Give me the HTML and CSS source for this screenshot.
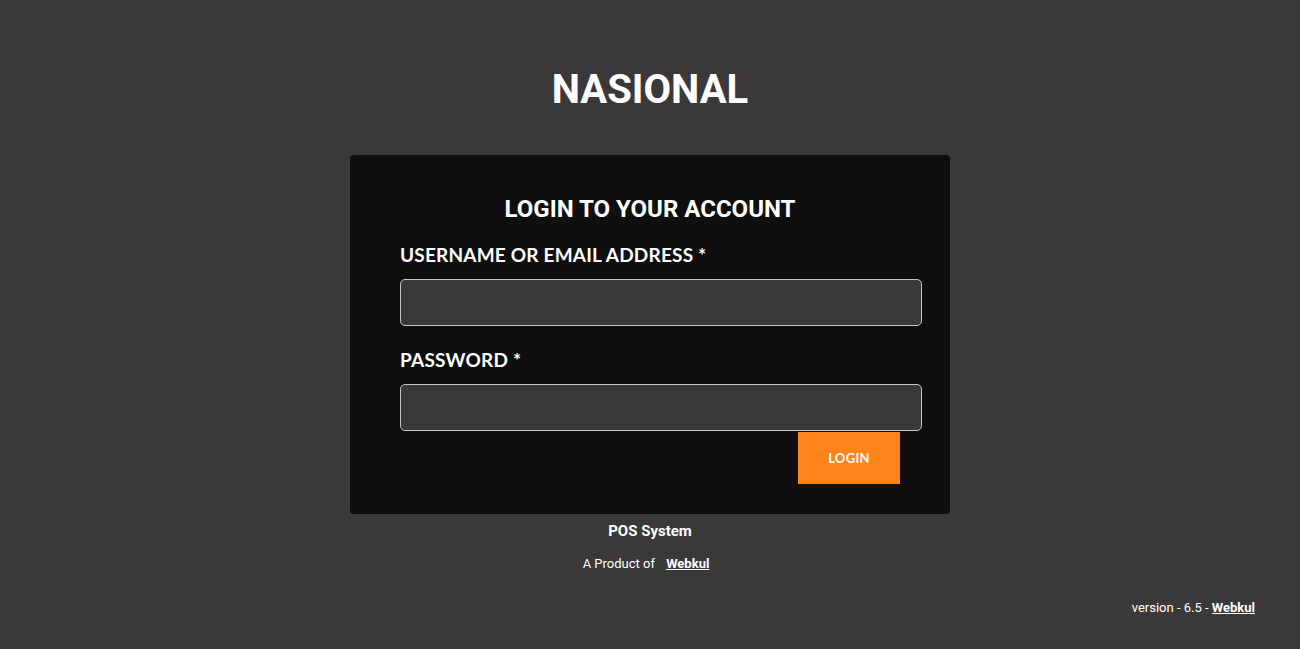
FILE: index.html
```html
<!DOCTYPE html>
<html>
<head>
<meta charset="utf-8">
<link rel="stylesheet" href="styles.css">
</head>
<body>
<div class="page">
  <h1 class="brand">NASIONAL</h1>
  <div class="card">
    <h2 class="card-title">LOGIN TO YOUR ACCOUNT</h2>
    <label class="label">USERNAME OR EMAIL ADDRESS *</label>
    <input class="field" type="text">
    <label class="label label-pw">PASSWORD *</label>
    <input class="field" type="password">
    <div class="actions"><button class="btn">LOGIN</button></div>
  </div>
  <div class="pos">POS System</div>
  <div class="product">A Product of <a class="link" href="#">Webkul</a></div>
  <div class="version">version - 6.5 - <a class="link" href="#">Webkul</a></div>
</div>
</body>
</html>
```
FILE: styles.css
```css
html, body { margin: 0; padding: 0; }
body {
  background: #3a3839;
  font-family: Roboto, "Liberation Sans", sans-serif;
  color: #fff;
  width: 1300px;
  height: 649px;
  overflow: hidden;
}
.page {
  display: flex;
  flex-direction: column;
  align-items: center;
  padding-top: 67px;
}
.brand {
  margin: 0;
  font-size: 40px;
  font-weight: 700;
  line-height: 46px;
  height: 46px;
}
.card {
  margin-top: 42px;
  width: 600px;
  height: 359px;
  box-sizing: border-box;
  background: #0f0f0f;
  border-radius: 4px;
  padding: 40px 28px 0 50px;
  display: flex;
  flex-direction: column;
}
.card-title {
  margin: 0 0 0 -22px;
  font-size: 24px;
  font-weight: 700;
  line-height: 28px;
  text-align: center;
}
.label {
  font-family: Lato, "Open Sans", sans-serif;
  font-weight: 700;
  font-size: 19px;
  line-height: 24px;
  margin-top: 19px;
  letter-spacing: 0.2px;
  padding-top: 1px;
}
.label-pw { margin-top: 21px; }
.field {
  margin-top: 12px;
  height: 47px;
  box-sizing: border-box;
  border: 1px solid #c4c4c4;
  border-radius: 5px;
  background: #3a3839;
  color: #fff;
  width: 522px;
  outline: none;
}
.actions {
  display: flex;
  justify-content: flex-end;
  padding-right: 22px;
  margin-top: 1px;
}
.btn {
  width: 102px;
  height: 52px;
  border: 0;
  background: #fd841a;
  color: #fff;
  font-family: Lato, "Open Sans", sans-serif;
  font-weight: 700;
  font-size: 13px;
  letter-spacing: 0.3px;
  padding-top: 1px;
}
.pos {
  margin-top: 8px;
  font-size: 15px;
  font-weight: 700;
  line-height: 18px;
}
.product {
  margin-top: 16px;
  font-size: 13px;
  line-height: 16px;
  padding-right: 8px;
}
.product .link { margin-left: 8px; }
.link {
  color: #fff;
  font-weight: 700;
  text-decoration: underline;
}
.version {
  align-self: flex-end;
  margin-right: 45px;
  margin-top: 28px;
  font-size: 13px;
  line-height: 16px;
}
```
